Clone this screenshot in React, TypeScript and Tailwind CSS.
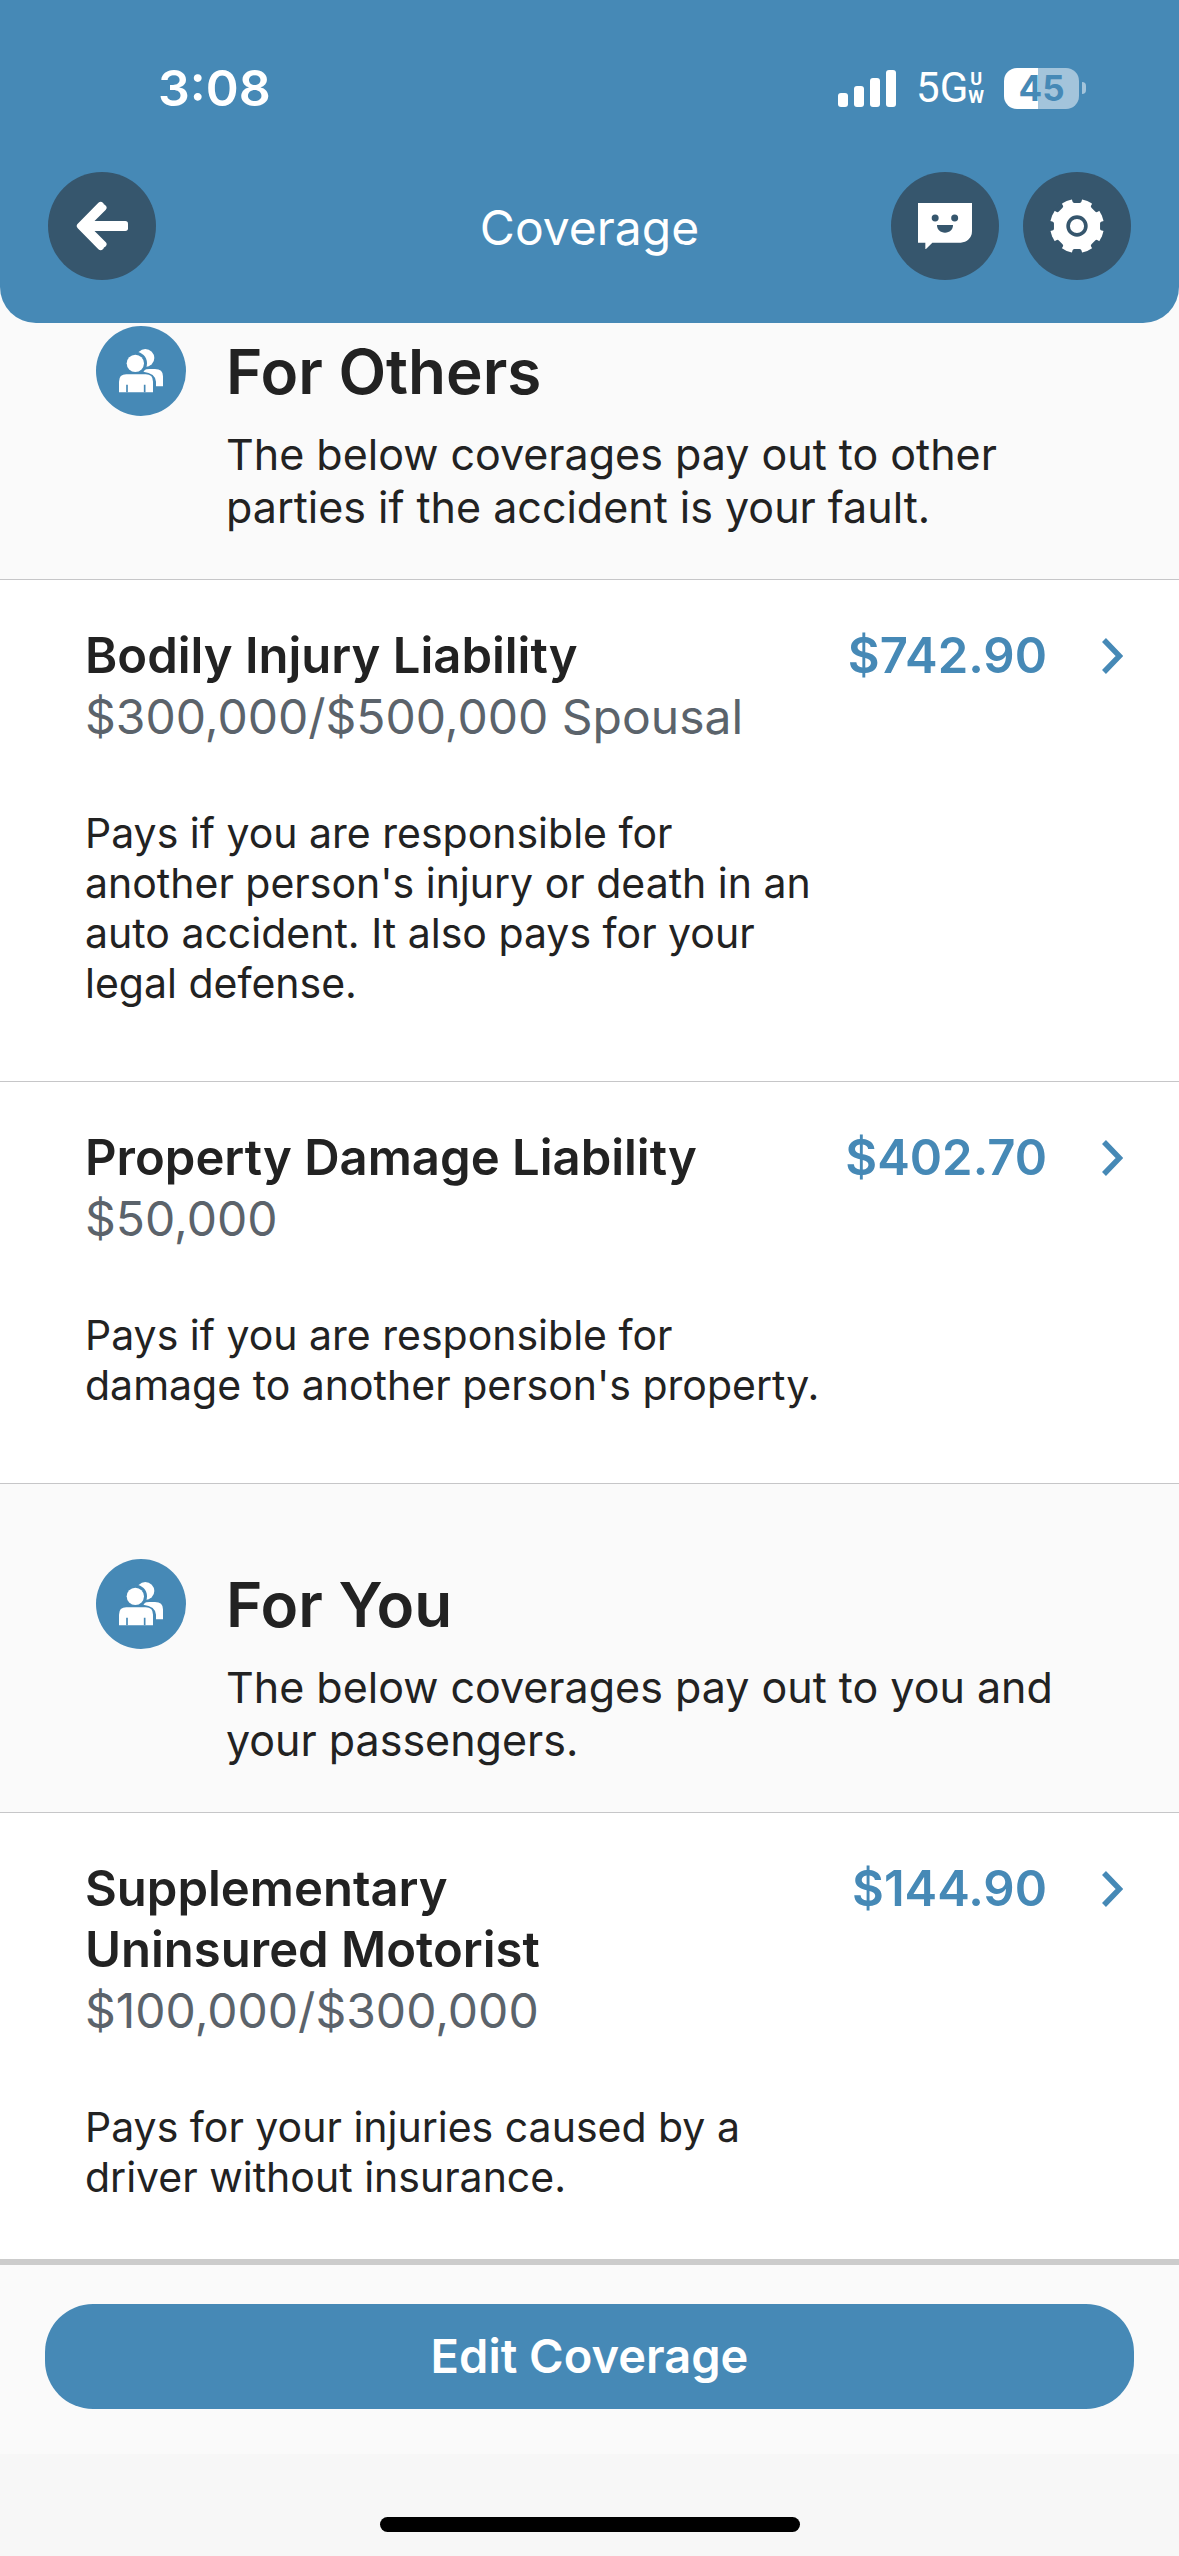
import { useState } from 'react';

interface Coverage {
  id: number;
  name: string;
  limit: string;
  price: string;
  description: string;
}

interface CoverageGroup {
  id: string;
  title: string;
  subtitle: string;
  coverages: Coverage[];
}

const coverageGroups: CoverageGroup[] = [
  {
    id: 'others',
    title: 'For Others',
    subtitle: 'The below coverages pay out to other parties if the accident is your fault.',
    coverages: [
      {
        id: 1,
        name: 'Bodily Injury Liability',
        limit: '$300,000/$500,000 Spousal',
        price: '$742.90',
        description:
          "Pays if you are responsible for\nanother person's injury or death in an\nauto accident. It also pays for your\nlegal defense.",
      },
      {
        id: 2,
        name: 'Property Damage Liability',
        limit: '$50,000',
        price: '$402.70',
        description: "Pays if you are responsible for\ndamage to another person's property.",
      },
    ],
  },
  {
    id: 'you',
    title: 'For You',
    subtitle: 'The below coverages pay out to you and your passengers.',
    coverages: [
      {
        id: 3,
        name: 'Supplementary\nUninsured Motorist',
        limit: '$100,000/$300,000',
        price: '$144.90',
        description: 'Pays for your injuries caused by a\ndriver without insurance.',
      },
    ],
  },
];

function ArrowIcon() {
  return (
    <svg viewBox="0 0 156 156" className="w-[52px]">
      <path
        d="M74 15 12 78l62 63M82 23 27 78l55 55"
        fill="none"
        stroke="white"
        strokeWidth="19"
        strokeLinecap="round"
        strokeLinejoin="round"
      />
      <rect x="16" y="63" width="140" height="30" rx="8" fill="white" />
    </svg>
  );
}

function ChatIcon() {
  return (
    <svg viewBox="0 0 162 140" className="w-[54px]">
      <path fill="white" d="M0 0H162V85A34 34 0 0 1 128 119H43L22 140V119H0Z" />
      <g fill="#36566d">
        <circle cx="51.500" cy="45" r="10.500" />
        <circle cx="110" cy="45" r="10.500" />
        <path d="M57 66H105C105 80 95 89 81 89S57 80 57 66Z" />
      </g>
    </svg>
  );
}

function GearIcon() {
  const angles = [0, 45, 90, 135, 180, 225, 270, 315];

  return (
    <svg viewBox="-82 -82 164 164" className="w-[54px]">
      <circle r="82" fill="white" />
      {angles.map(angle => (
        <path
          key={angle}
          d="M-16 -84L-14 -75Q-13 -70 -8 -70H8Q13 -70 14 -75L16 -84Z"
          fill="#36566d"
          transform={`rotate(${angle})`}
        />
      ))}
      <circle r="27" fill="none" stroke="#36566d" strokeWidth="11" />
    </svg>
  );
}

function PeopleIcon() {
  return (
    <svg viewBox="0 0 132 130" className="w-11">
      <g fill="white">
        <circle cx="79" cy="27" r="27" />
        <path d="M73 64Q82 60 92 60H108Q132 60 132 82V112H111V98Q109 72 73 68Z" />
      </g>
      <circle cx="49" cy="43" r="35" fill="#4689b6" />
      <g fill="white">
        <circle cx="49" cy="43" r="26" />
        <path d="M0 130V98Q0 76 22 76H80Q102 76 102 98V130Z" />
      </g>
      <path d="M24 107V130M77 107V130" stroke="#4689b6" strokeWidth="5" />
    </svg>
  );
}

function StatusBar() {
  return (
    <div className="flex items-center justify-between h-[172px] pl-[158px] pr-[93px] pt-1">
      <span className="text-[50px] leading-[60px] font-semibold">3:08</span>
      <div className="flex items-center">
        <svg viewBox="0 0 58 38" className="w-[58px]" fill="white">
          <rect x="0" y="24" width="10" height="14" rx="3" />
          <rect x="16" y="17" width="10" height="21" rx="3" />
          <rect x="32" y="9" width="10" height="29" rx="3" />
          <rect x="48" y="1" width="10" height="37" rx="3" />
        </svg>
        <div className="ml-5 flex items-center font-['Roboto',sans-serif]">
          <span className="text-[42px] leading-[48px]">5G</span>
          <span className="flex flex-col items-center text-[18px] leading-[18px] font-bold">
            <span>U</span>
            <span>W</span>
          </span>
        </div>
        <div className="ml-5 flex items-center gap-[3px]">
          <div className="flex items-center justify-center w-[75px] h-[41px] rounded-[13px] bg-linear-to-r from-white from-45% to-[#a3c4db] to-45% text-[#4689b6] text-[35px] leading-[41px] font-bold">
            45
          </div>
          <div className="w-1 h-3 rounded-r-full bg-[#a3c4db]" />
        </div>
      </div>
    </div>
  );
}

function GroupHeader({ title, subtitle }: { title: string; subtitle: string }) {
  return (
    <div className="flex items-start gap-10 pl-24 pr-[85px] pb-[45px]">
      <div className="flex items-center justify-center shrink-0 size-[90px] rounded-full bg-[#4689b6]">
        <PeopleIcon />
      </div>
      <div>
        <h2 className="text-[62px] leading-[92px] font-semibold">{title}</h2>
        <p className="mt-2.5 text-[43px] leading-[53px]">{subtitle}</p>
      </div>
    </div>
  );
}

function CoverageRow({ coverage }: { coverage: Coverage }) {
  return (
    <li className="border-t border-[#c6c6c8] bg-white">
      <button className="block w-full pl-[85px] pr-14 pt-[45px] pb-[73px] text-left">
        <div className="flex items-start justify-between">
          <div>
            <h3 className="text-[49px] leading-[61px] font-semibold whitespace-pre-line">{coverage.name}</h3>
            <p className="text-[48px] leading-[61px] text-[#5b636b]">{coverage.limit}</p>
          </div>
          <div className="flex items-center gap-[55px] text-[#4689b6]">
            <span className="text-[49px] leading-[61px] font-semibold">{coverage.price}</span>
            <svg viewBox="0 0 21 36" className="w-[21px]" fill="none" stroke="currentColor" strokeWidth="5.500">
              <path d="M2 2 17.500 18 2 34" />
            </svg>
          </div>
        </div>
        <p className="mt-[61px] text-[41px] leading-[50px] whitespace-pre-line">{coverage.description}</p>
      </button>
    </li>
  );
}

export default function App() {
  const [groups] = useState<CoverageGroup[]>(coverageGroups);

  return (
    <div className="flex flex-col h-screen bg-[#fafafa] text-[#222222] font-['Inter',sans-serif]">
      {/* Header */}
      <header className="shrink-0 rounded-b-[36px] bg-[#4689b6] text-white pb-[43px]">
        <StatusBar />
        <div className="grid grid-cols-[1fr_auto_1fr] items-center px-12">
          <button aria-label="Back" className="flex items-center justify-center size-[108px] rounded-full bg-[#36566d]">
            <ArrowIcon />
          </button>
          <h1 className="pt-1 text-[48px] leading-[60px]">Coverage</h1>
          <div className="flex justify-end gap-6">
            <button aria-label="Chat" className="flex items-center justify-center size-[108px] rounded-full bg-[#36566d]">
              <ChatIcon />
            </button>
            <button aria-label="Settings" className="flex items-center justify-center size-[108px] rounded-full bg-[#36566d]">
              <GearIcon />
            </button>
          </div>
        </div>
      </header>

      {/* Coverage list */}
      <main className="flex-1 min-h-0 overflow-y-auto [scrollbar-width:none]">
        {groups.map(group => (
          <section key={group.id} className="border-t border-[#c6c6c8] pt-[75px] first:border-t-0 first:pt-[3px]">
            <GroupHeader title={group.title} subtitle={group.subtitle} />
            <ul>
              {group.coverages.map(coverage => (
                <CoverageRow key={coverage.id} coverage={coverage} />
              ))}
            </ul>
          </section>
        ))}
      </main>

      {/* Footer */}
      <footer className="shrink-0 border-t-[6px] border-[#cccccc]">
        <div className="px-[45px] pt-[39px] pb-[45px]">
          <button className="w-full h-[105px] rounded-[48px] bg-[#4689b6] text-white text-[47px] font-semibold">
            Edit Coverage
          </button>
        </div>
        <div className="flex items-end justify-center h-[102px] pb-6 bg-[#f7f7f7]">
          <div className="w-[420px] h-[15px] rounded-full bg-black" />
        </div>
      </footer>
    </div>
  );
}
